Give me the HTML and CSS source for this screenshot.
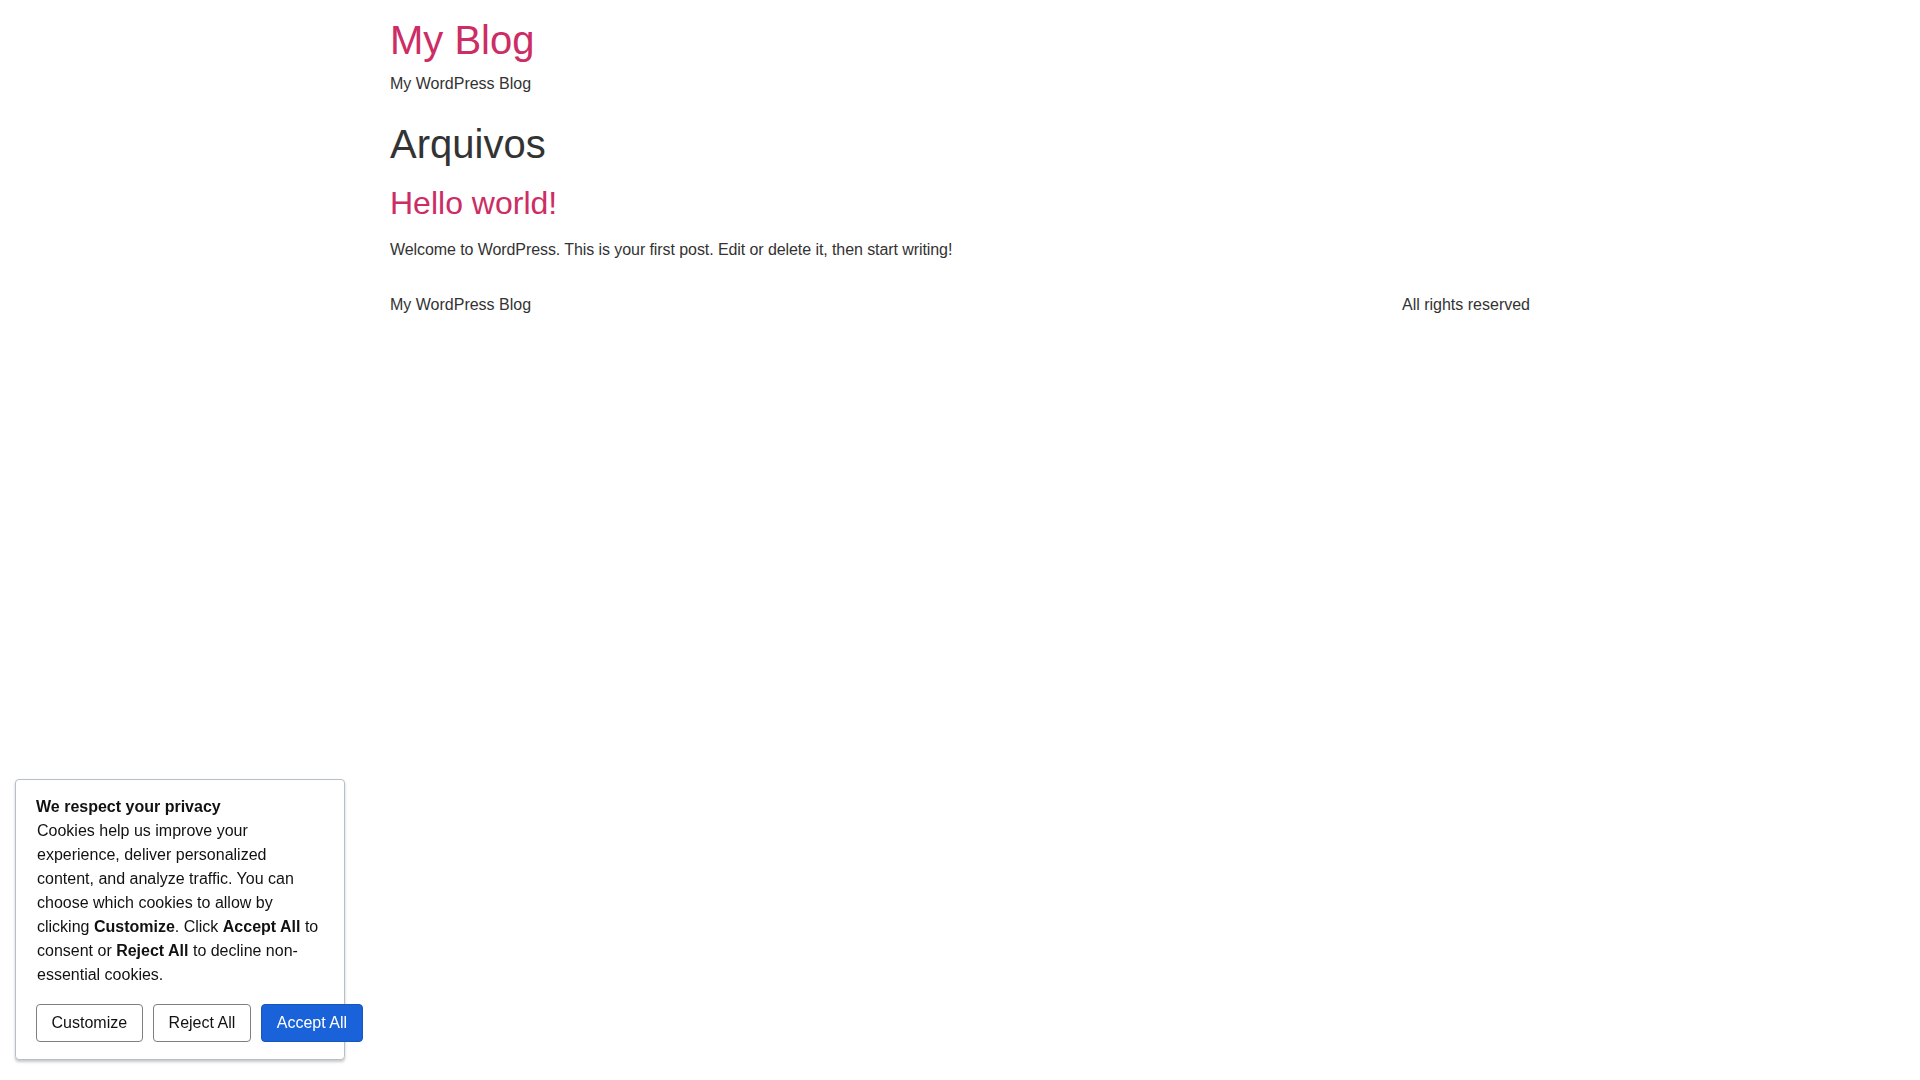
FILE: index.html
```html
<!DOCTYPE html>
<html lang="pt">
<head>
<meta charset="utf-8">
<title>Arquivos – My Blog</title>
<link rel="stylesheet" href="styles.css">
</head>
<body>
<div class="container">
  <header class="site-header">
    <p class="site-title"><a href="#">My Blog</a></p>
    <p class="site-tagline">My WordPress Blog</p>
  </header>
  <main class="site-main">
    <h1 class="archive-title">Arquivos</h1>
    <article class="post">
      <h2 class="post-title"><a href="#">Hello world!</a></h2>
      <p class="post-excerpt">Welcome to WordPress. This is your first post. Edit or delete it, then start writing!</p>
    </article>
  </main>
  <footer class="site-footer">
    <span>My WordPress Blog</span>
    <span>All rights reserved</span>
  </footer>
</div>

<div class="cookie-banner">
  <p class="cookie-title">We respect your privacy</p>
  <p class="cookie-text">Cookies help us improve your experience, deliver personalized content, and analyze traffic. You can choose which cookies to allow by clicking <b>Customize</b>. Click <b>Accept All</b> to consent or <b>Reject All</b> to decline non-essential cookies.</p>
  <div class="cookie-actions">
    <button class="btn btn-outline">Customize</button>
    <button class="btn btn-outline">Reject All</button>
    <button class="btn btn-primary">Accept All</button>
  </div>
</div>
</body>
</html>
```

FILE: styles.css
```css
* { box-sizing: border-box; }

html, body {
  margin: 0;
  padding: 0;
  background: #ffffff;
}

body {
  font-family: "Liberation Sans", Arial, sans-serif;
  font-size: 16px;
  line-height: 24px;
  color: #333333;
}

a {
  color: #cc2d64;
  text-decoration: none;
}

.container {
  width: 1140px;
  margin: 0 auto;
}

.site-header {
  padding-top: 16px;
}

.site-title {
  margin: 0;
  font-size: 40px;
  line-height: 48px;
  font-weight: normal;
}

.site-tagline {
  margin: 8px 0 0;
}

.archive-title {
  margin: 24px 0 0;
  font-size: 40px;
  line-height: 48px;
  font-weight: normal;
  color: #333333;
}

.post-title {
  margin: 16px 0 0;
  font-size: 32px;
  line-height: 38px;
  font-weight: normal;
}

.post-excerpt {
  margin: 16px 0 0;
  letter-spacing: -0.08px;
}

.site-footer {
  margin-top: 31px;
  display: flex;
  justify-content: space-between;
}

/* Cookie banner */
.cookie-banner {
  position: fixed;
  left: 15px;
  bottom: 20px;
  width: 330px;
  padding: 15px 20px 17px;
  background: #ffffff;
  border: 1px solid #b7bfca;
  border-radius: 4px;
  box-shadow: 0 2px 3px rgba(0, 0, 0, 0.22);
  color: #111111;
}

.cookie-title {
  margin: 0;
  font-weight: bold;
  line-height: 24px;
}

.cookie-text {
  margin: 0;
  padding-left: 1px;
  line-height: 24px;
}

.cookie-text b {
  font-weight: bold;
}

.cookie-actions {
  display: flex;
  flex-wrap: nowrap;
  gap: 10.5px;
  margin-top: 17px;
}

.btn {
  flex: none;
  font-family: "Liberation Sans", Arial, sans-serif;
  font-size: 16px;
  line-height: 18px;
  padding: 9px 14.5px;
  border-radius: 4px;
  cursor: pointer;
  white-space: nowrap;
}

.btn-outline {
  background: #ffffff;
  color: #111111;
  border: 1px solid #7f7f7f;
}

.btn-primary {
  background: #1a62da;
  color: #ffffff;
  border: 1px solid #1a55b8;
}
```
